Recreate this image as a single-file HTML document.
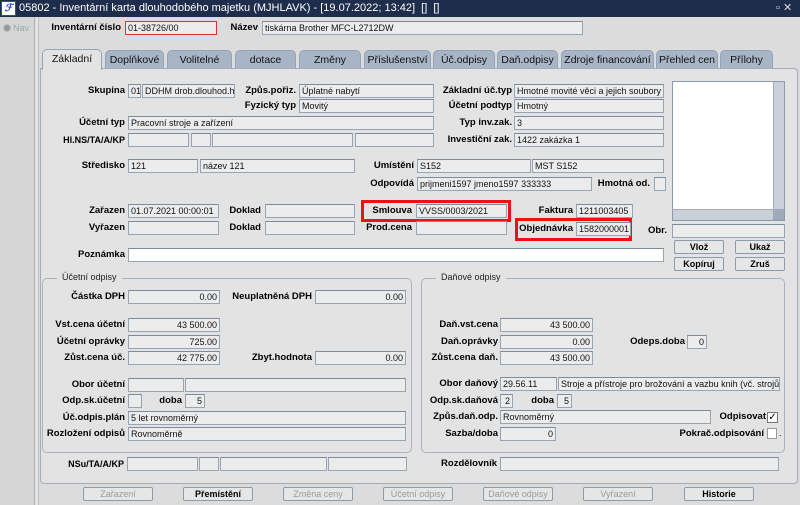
<!DOCTYPE html>
<html><head><meta charset="utf-8">
<style>
*{box-sizing:border-box;margin:0;padding:0}
body{width:800px;height:505px;overflow:hidden;background:#dcdcdc;font-family:"Liberation Sans",Arial,sans-serif;position:relative;color:#000}
div{position:absolute}
.f{height:14px;background:#ececec;border:1px solid #98a4b4;border-top-color:#7f8a9a;font-size:9px;line-height:12px;padding:0 2px;white-space:nowrap;overflow:hidden;color:#111}
.r{text-align:right}
.l{font-size:9.5px;font-weight:bold;white-space:nowrap;line-height:14px;text-align:right}
.tab{top:50px;height:19px;background:#a8b5c6;border:1px solid #95a3b6;border-bottom:none;border-radius:5px 5px 0 0;font-size:10.5px;text-align:center;line-height:18px;color:#111}
.b{height:14px;background:#e6e6e6;border:1px solid #8f9aaa;border-radius:2px;font-size:9px;text-align:center;line-height:12px;font-weight:bold}
.bd{color:#9a9a9a;font-weight:normal}
.g{border:1px solid #a9b3c0;border-radius:5px}
.gl{font-size:9px;background:#e3e3e3;padding:0 5px;line-height:11px;color:#222}
.red{border:3px solid #ee1111}
</style></head><body>
<div style="left:0;top:0;width:800px;height:17px;background:#1d2d4b"></div>
<div style="left:1px;top:1px;width:15px;height:15px;background:#fff;border:1px solid #2a46c0;font:italic bold 10px 'Liberation Serif',serif;color:#1f3ec8;line-height:13px;text-align:center">ℱ</div>
<div style="left:19px;top:2px;font-size:11px;color:#fff;white-space:nowrap;line-height:13px">05802 - Inventární karta dlouhodobého majetku (MJHLAVK) - [19.07.2022; 13:42] &nbsp;[] &nbsp;[]</div>
<div style="left:776px;top:1px;font-size:11px;color:#ddd;line-height:14px">▫ ✕</div>
<div style="left:0;top:17px;width:35px;height:488px;background:#d5d5d5;border-right:1px solid #b5b5b5"></div>
<div style="left:3px;top:24px;width:8px;height:8px;border-radius:50%;background:#999;border:1px solid #bbb"></div>
<div style="left:13px;top:22px;font-size:9px;color:#9aa;line-height:12px">Nav</div>
<div style="left:36px;top:17px;width:3px;height:488px;background:#e6e6e6;border-right:1px solid #c0c0c0"></div>
<div class="l" style="right:679px;top:21px">Inventární číslo</div>
<div class="f" style="left:125px;top:21px;width:92px;border:1px solid #e03030">01-38726/00</div>
<div class="l" style="right:542px;top:21px">Název</div>
<div class="f" style="left:262px;top:21px;width:321px">tiskárna Brother MFC-L2712DW</div>
<div class="tab" style="left:42px;width:60px;top:49px;height:21px;background:#e3e3e3;z-index:2">Základní</div>
<div class="tab" style="left:105px;width:59px">Doplňkové</div>
<div class="tab" style="left:167px;width:65px">Volitelné</div>
<div class="tab" style="left:235px;width:61px">dotace</div>
<div class="tab" style="left:299px;width:62px">Změny</div>
<div class="tab" style="left:364px;width:67px">Příslušenství</div>
<div class="tab" style="left:433px;width:62px">Úč.odpisy</div>
<div class="tab" style="left:497px;width:61px">Daň.odpisy</div>
<div class="tab" style="left:561px;width:93px">Zdroje financování</div>
<div class="tab" style="left:656px;width:62px">Přehled cen</div>
<div class="tab" style="left:720px;width:53px">Přílohy</div>
<div style="left:40px;top:68px;width:758px;height:416px;background:#e3e3e3;border:1px solid #a3adba;border-radius:0 4px 4px 4px"></div>
<div class="l" style="right:675px;top:84px">Skupina</div>
<div class="f" style="left:128px;top:84px;width:13px">01</div>
<div class="f" style="left:142px;top:84px;width:93px">DDHM drob.dlouhod.hm</div>
<div class="l" style="right:504px;top:84px">Způs.pořiz.</div>
<div class="f" style="left:299px;top:84px;width:135px">Úplatné nabytí</div>
<div class="l" style="right:504px;top:99px">Fyzický typ</div>
<div class="f" style="left:299px;top:99px;width:135px">Movitý</div>
<div class="l" style="right:675px;top:116px">Účetní typ</div>
<div class="f" style="left:128px;top:116px;width:306px">Pracovní stroje a zařízení</div>
<div class="l" style="right:675px;top:133px;font-size:9px">Hl.NS/TA/A/KP</div>
<div class="f" style="left:128px;top:133px;width:61px"></div>
<div class="f" style="left:191px;top:133px;width:20px"></div>
<div class="f" style="left:212px;top:133px;width:141px"></div>
<div class="f" style="left:355px;top:133px;width:79px"></div>
<div class="l" style="right:288px;top:84px">Základní úč.typ</div>
<div class="f" style="left:514px;top:84px;width:150px">Hmotné movité věci a jejich soubory</div>
<div class="l" style="right:288px;top:99px">Účetní podtyp</div>
<div class="f" style="left:514px;top:99px;width:150px">Hmotný</div>
<div class="l" style="right:288px;top:116px">Typ inv.zak.</div>
<div class="f" style="left:514px;top:116px;width:150px">3</div>
<div class="l" style="right:288px;top:133px">Investiční zak.</div>
<div class="f" style="left:514px;top:133px;width:150px">1422 zakázka 1</div>
<div style="left:672px;top:81px;width:113px;height:140px;background:#fff;border:1px solid #8f9aaa"></div>
<div style="left:773px;top:82px;width:11px;height:127px;background:#c9d0d9;border-left:1px solid #aab"></div>
<div style="left:673px;top:209px;width:111px;height:11px;background:#c9d0d9;border-top:1px solid #aab"></div>
<div style="left:773px;top:209px;width:11px;height:11px;background:#9fabbb"></div>
<div class="l" style="right:675px;top:159px">Středisko</div>
<div class="f" style="left:128px;top:159px;width:70px">121</div>
<div class="f" style="left:200px;top:159px;width:155px">název 121</div>
<div class="l" style="right:386px;top:159px">Umístění</div>
<div class="f" style="left:417px;top:159px;width:114px">S152</div>
<div class="f" style="left:532px;top:159px;width:132px">MST S152</div>
<div class="l" style="right:386px;top:177px">Odpovídá</div>
<div class="f" style="left:417px;top:177px;width:175px">prijmeni1597 jmeno1597 333333</div>
<div class="l" style="right:150px;top:177px">Hmotná od.</div>
<div class="f" style="left:654px;top:177px;width:12px"></div>
<div class="l" style="right:675px;top:204px">Zařazen</div>
<div class="f" style="left:128px;top:204px;width:91px">01.07.2021 00:00:01</div>
<div class="l" style="right:539px;top:204px">Doklad</div>
<div class="f" style="left:265px;top:204px;width:90px"></div>
<div class="red" style="left:361px;top:200px;width:150px;height:22px"></div>
<div class="l" style="right:388px;top:204px">Smlouva</div>
<div class="f" style="left:416px;top:204px;width:91px">VVSS/0003/2021</div>
<div class="l" style="right:227px;top:204px">Faktura</div>
<div class="f" style="left:576px;top:204px;width:57px">1211003405</div>
<div class="l" style="right:675px;top:221px">Vyřazen</div>
<div class="f" style="left:128px;top:221px;width:91px"></div>
<div class="l" style="right:539px;top:221px">Doklad</div>
<div class="f" style="left:265px;top:221px;width:90px"></div>
<div class="l" style="right:388px;top:221px">Prod.cena</div>
<div class="f" style="left:416px;top:221px;width:91px"></div>
<div class="red" style="left:515px;top:218px;width:117px;height:23px"></div>
<div class="l" style="right:227px;top:222px">Objednávka</div>
<div class="f" style="left:576px;top:222px;width:55px">1582000001</div>
<div class="l" style="right:133px;top:224px">Obr.</div>
<div class="f" style="left:672px;top:224px;width:113px"></div>
<div class="b" style="left:674px;top:240px;width:50px">Vlož</div>
<div class="b" style="left:735px;top:240px;width:50px">Ukaž</div>
<div class="b" style="left:674px;top:257px;width:50px">Kopíruj</div>
<div class="b" style="left:735px;top:257px;width:50px">Zruš</div>
<div class="l" style="right:675px;top:248px">Poznámka</div>
<div class="f" style="left:128px;top:248px;width:536px;background:#fff"></div>
<div class="g" style="left:42px;top:278px;width:370px;height:175px"></div>
<div class="gl" style="left:57px;top:272px">Účetní odpisy</div>
<div class="g" style="left:421px;top:278px;width:364px;height:175px"></div>
<div class="gl" style="left:436px;top:272px">Daňové odpisy</div>
<div class="l" style="right:675px;top:290px">Částka DPH</div>
<div class="f r" style="left:128px;top:290px;width:92px">0.00</div>
<div class="l" style="right:488px;top:290px">Neuplatněná DPH</div>
<div class="f r" style="left:315px;top:290px;width:91px">0.00</div>
<div class="l" style="right:675px;top:318px">Vst.cena účetní</div>
<div class="f r" style="left:128px;top:318px;width:92px">43 500.00</div>
<div class="l" style="right:675px;top:335px">Účetní oprávky</div>
<div class="f r" style="left:128px;top:335px;width:92px">725.00</div>
<div class="l" style="right:675px;top:351px">Zůst.cena úč.</div>
<div class="f r" style="left:128px;top:351px;width:92px">42 775.00</div>
<div class="l" style="right:488px;top:351px">Zbyt.hodnota</div>
<div class="f r" style="left:315px;top:351px;width:91px">0.00</div>
<div class="l" style="right:675px;top:378px">Obor účetní</div>
<div class="f" style="left:128px;top:378px;width:56px"></div>
<div class="f" style="left:185px;top:378px;width:221px"></div>
<div class="l" style="right:675px;top:394px">Odp.sk.účetní</div>
<div class="f" style="left:128px;top:394px;width:14px"></div>
<div class="l" style="right:618px;top:394px">doba</div>
<div class="f r" style="left:185px;top:394px;width:20px">5</div>
<div class="l" style="right:675px;top:411px">Úč.odpis.plán</div>
<div class="f" style="left:128px;top:411px;width:278px">5 let rovnoměrný</div>
<div class="l" style="right:675px;top:427px">Rozložení odpisů</div>
<div class="f" style="left:128px;top:427px;width:278px">Rovnoměrně</div>
<div class="l" style="right:302px;top:318px">Daň.vst.cena</div>
<div class="f r" style="left:500px;top:318px;width:93px">43 500.00</div>
<div class="l" style="right:302px;top:335px">Daň.oprávky</div>
<div class="f r" style="left:500px;top:335px;width:93px">0.00</div>
<div class="l" style="right:115px;top:335px">Odeps.doba</div>
<div class="f r" style="left:687px;top:335px;width:20px">0</div>
<div class="l" style="right:302px;top:351px">Zůst.cena daň.</div>
<div class="f r" style="left:500px;top:351px;width:93px">43 500.00</div>
<div class="l" style="right:302px;top:377px">Obor daňový</div>
<div class="f" style="left:500px;top:377px;width:57px">29.56.11</div>
<div class="f" style="left:558px;top:377px;width:222px">Stroje a přístroje pro brožování a vazbu knih (vč. strojů n</div>
<div class="l" style="right:302px;top:394px">Odp.sk.daňová</div>
<div class="f r" style="left:500px;top:394px;width:13px">2</div>
<div class="l" style="right:246px;top:394px">doba</div>
<div class="f r" style="left:557px;top:394px;width:15px">5</div>
<div class="l" style="right:302px;top:410px">Způs.daň.odp.</div>
<div class="f" style="left:500px;top:410px;width:211px">Rovnoměrný</div>
<div class="l" style="right:34px;top:410px">Odpisovat</div>
<div style="left:767px;top:412px;width:11px;height:11px;background:#fff;border:1px solid #777;font-size:10px;line-height:9px;text-align:center">✓</div>
<div class="l" style="right:302px;top:427px">Sazba/doba</div>
<div class="f r" style="left:500px;top:427px;width:56px">0</div>
<div class="l" style="right:36px;top:427px">Pokrač.odpisování</div>
<div style="left:767px;top:428px;width:10px;height:11px;background:#fff;border:1px solid #999"></div>
<div style="left:779px;top:428px;font-size:9px">.</div>
<div class="l" style="right:676px;top:457px;font-size:9px">NSu/TA/A/KP</div>
<div class="f" style="left:127px;top:457px;width:71px"></div>
<div class="f" style="left:199px;top:457px;width:20px"></div>
<div class="f" style="left:220px;top:457px;width:107px"></div>
<div class="f" style="left:328px;top:457px;width:79px"></div>
<div class="l" style="right:303px;top:457px">Rozdělovník</div>
<div class="f" style="left:500px;top:457px;width:279px"></div>
<div class="b bd" style="left:83px;top:487px;width:70px">Zařazení</div>
<div class="b" style="left:183px;top:487px;width:70px">Přemístění</div>
<div class="b bd" style="left:283px;top:487px;width:70px">Změna ceny</div>
<div class="b bd" style="left:383px;top:487px;width:70px">Účetní odpisy</div>
<div class="b bd" style="left:483px;top:487px;width:70px">Daňové odpisy</div>
<div class="b bd" style="left:583px;top:487px;width:70px">Vyřazení</div>
<div class="b" style="left:684px;top:487px;width:70px">Historie</div>
</body></html>
